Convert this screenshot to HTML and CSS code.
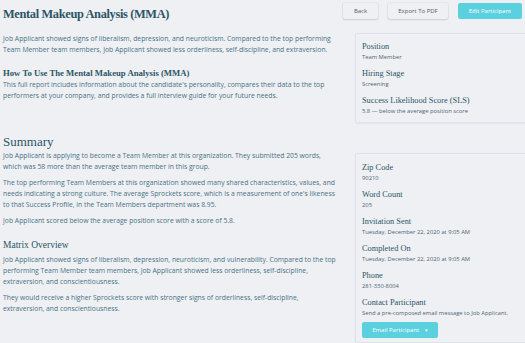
FILE: index.html
```html
<!DOCTYPE html>
<html lang="en">
<head>
  <meta charset="UTF-8">
  <meta name="viewport" content="width=device-width, initial-scale=1.0">
  <title>Mental Makeup Analysis</title>
  <link rel="stylesheet" href="styles.css">
</head>
<body>
  <div id="report">
    <!-- Header -->
    <div class="report-header">
      <h1>Mental Makeup Analysis (MMA)</h1>
      <div class="actions">
        <button class="btn btn-light btn-back">Back</button>
        <button class="btn btn-light btn-export">Export To PDF</button>
        <button class="btn btn-teal btn-edit">Edit Participant</button>
      </div>
    </div>

    <div class="report-body">
      <!-- Main Column -->
      <div class="main-col">
        <p class="intro">Job Applicant showed signs of liberalism, depression, and neuroticism. Compared to the top performing Team Member team members, Job Applicant showed less orderliness, self-discipline, and extraversion.</p>

        <h3>How To Use The Mental Makeup Analysis (MMA)</h3>
        <p class="tight">This full report includes information about the candidate's personality, compares their data to the top performers at your company, and provides a full interview guide for your future needs.</p>

        <h2>Summary</h2>
        <p>Job Applicant is applying to become a Team Member at this organization. They submitted 205 words, which was 58 more than the average team member in this group.</p>
        <p>The top performing Team Members at this organization showed many shared characteristics, values, and needs indicating a strong culture. The average Sprockets score, which is a measurement of one's likeness to that Success Profile, in the Team Members department was 8.95.</p>
        <p>Job Applicant scored below the average position score with a score of 5.8.</p>

        <h4>Matrix Overview</h4>
        <p>Job Applicant showed signs of liberalism, depression, neuroticism, and vulnerability. Compared to the top performing Team Member team members, Job Applicant showed less orderliness, self-discipline, extraversion, and conscientiousness.</p>
        <p>They would receive a higher Sprockets score with stronger signs of orderliness, self-discipline, extraversion, and conscientiousness.</p>
      </div>

      <!-- Side Column -->
      <div class="side-col">
        <div class="card">
          <div class="field">
            <div class="label">Position</div>
            <div class="value">Team Member</div>
          </div>
          <div class="field">
            <div class="label">Hiring Stage</div>
            <div class="value">Screening</div>
          </div>
          <div class="field">
            <div class="label">Success Likelihood Score (SLS)</div>
            <div class="value">5.8 — below the average position score</div>
          </div>
        </div>

        <div class="card card-details">
          <div class="field">
            <div class="label">Zip Code</div>
            <div class="value">90210</div>
          </div>
          <div class="field">
            <div class="label">Word Count</div>
            <div class="value">205</div>
          </div>
          <div class="field">
            <div class="label">Invitation Sent</div>
            <div class="value">Tuesday, December 22, 2020 at 9:05 AM</div>
          </div>
          <div class="field">
            <div class="label">Completed On</div>
            <div class="value">Tuesday, December 22, 2020 at 9:05 AM</div>
          </div>
          <div class="field">
            <div class="label">Phone</div>
            <div class="value">281-330-8004</div>
          </div>
          <div class="field field-last">
            <div class="label">Contact Participant</div>
            <div class="value">Send a pre-composed email message to Job Applicant.</div>
          </div>
          <button class="btn btn-teal btn-email">Email Participant <span class="caret">▾</span></button>
        </div>
      </div>
    </div>
  </div>
</body>
</html>
```

FILE: styles.css
```css
/* General Styling */
html, body {
  overflow: hidden;
}

body {
  font-family: 'Open Sans', sans-serif;
  margin: 0;
  padding: 0;
  background: #eef0f4;
  color: #4a7284;
  font-size: 6.8px;
  line-height: 11px;
}

h1, h2, h3, h4, .label {
  font-family: 'Liberation Serif', serif;
  color: #2c5566;
  margin: 0;
}

p {
  margin: 0 0 5px 0;
}

/* Header */
.report-header {
  display: flex;
  justify-content: space-between;
  align-items: flex-start;
  padding: 3px 3px 0 3px;
}

.report-header h1 {
  font-size: 12.4px;
  line-height: 18px;
  margin-top: 2px;
  letter-spacing: -0.35px;
}

.actions {
  display: flex;
  gap: 10px;
}

.btn {
  font-family: 'Open Sans', sans-serif;
  font-size: 6px;
  height: 16px;
  padding: 0;
  border: none;
  border-radius: 2px;
  cursor: pointer;
}

.btn-light {
  background: #eef0f4;
  color: #4e5d66;
  box-shadow: 0 1px 2px rgba(0, 0, 0, 0.12), 0 0 0 1px rgba(0, 0, 0, 0.03);
}

.btn-teal {
  background: #5bd0df;
  color: #fff;
}

.btn-back { width: 35px; }
.btn-export { width: 60px; }
.btn-edit { width: 64px; }

/* Body Layout */
.report-body {
  display: grid;
  grid-template-columns: 337px 180px;
  column-gap: 15px;
  padding: 10px 0 0 3px;
}

.main-col .intro {
  margin-top: 0;
  margin-bottom: 12px;
}

.main-col h3 {
  font-size: 8.7px;
  font-weight: bold;
  line-height: 12px;
}

.main-col .tight {
  margin-bottom: 33px;
}

.main-col h2 {
  font-size: 13px;
  font-weight: normal;
  line-height: 16px;
  margin-bottom: 0;
}

.main-col h4 {
  font-size: 9.5px;
  font-weight: normal;
  line-height: 12px;
  margin: 13px 0 3px 0;
}

/* Side Cards */
.side-col {
  display: flex;
  flex-direction: column;
  gap: 30px;
}

.card {
  border: 1px solid #dfe2e8;
  border-radius: 2px;
  padding: 7px 6px 0 6px;
  box-shadow: 0 1px 2px rgba(0, 0, 0, 0.05);
}

.card-details {
  padding-top: 8px;
  padding-bottom: 4px;
}

.field {
  margin-bottom: 6px;
}

.field-last {
  margin-bottom: 0;
}

.label {
  font-size: 8.3px;
  line-height: 11px;
}

.value {
  font-size: 5.8px;
  line-height: 10px;
  color: #4e6470;
}

.btn-email {
  display: block;
  width: 76px;
  margin-top: 4px;
}

.caret {
  font-size: 5px;
  margin-left: 4px;
}
```
